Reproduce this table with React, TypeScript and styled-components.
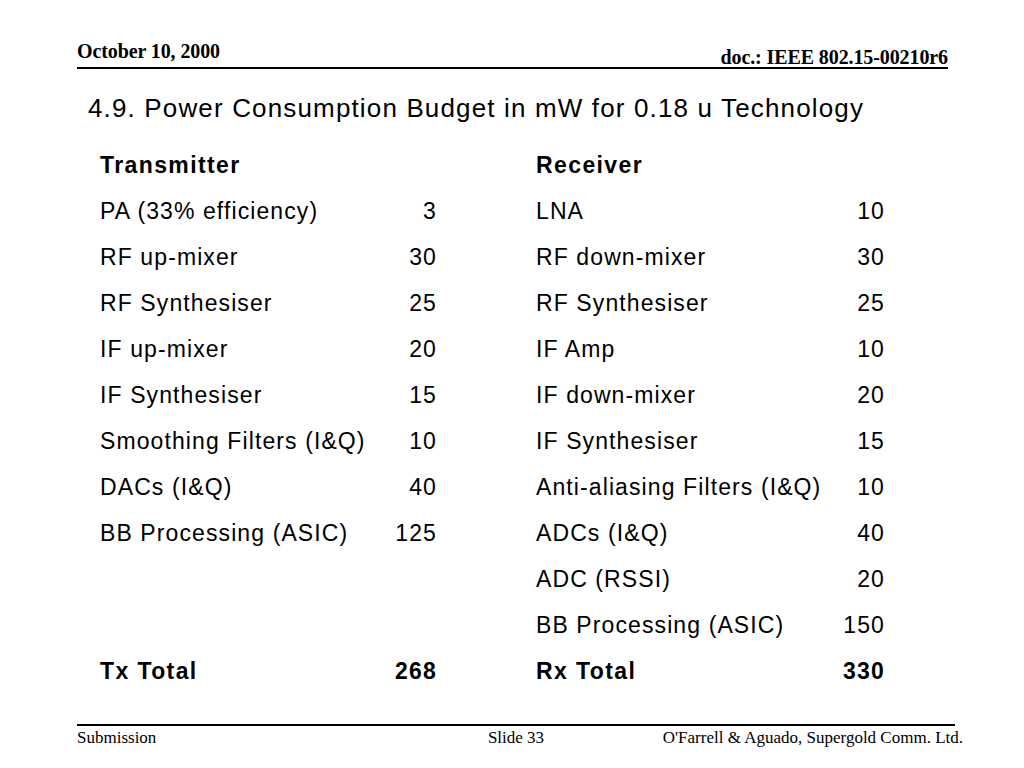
import React from "react";
import styled, { createGlobalStyle } from "styled-components";

const Global = createGlobalStyle`
  html, body { margin: 0; padding: 0; background: #fff; }
  body { width: 1024px; height: 768px; overflow: hidden; }
`;

const Slide = styled.div`
  width: 1024px;
  height: 768px;
  box-sizing: border-box;
  background: #fff;
  color: #000;
  display: flex;
  flex-direction: column;
  padding: 40px 0 0 0;
`;

const Header = styled.header`
  margin-left: 77px;
  width: 871px;
  height: 27px;
  display: flex;
  justify-content: space-between;
  align-items: flex-end;
  border-bottom: 2px solid #000;
  font-family: "Liberation Serif", "Times New Roman", serif;
  font-weight: bold;
`;

const HeaderText = styled.span<{ $lift: number }>`
  font-size: 20px;
  line-height: 20px;
  letter-spacing: -0.1px;
  margin-bottom: ${(p) => p.$lift}px;
`;

const Title = styled.h1`
  margin: 24px 0 0 88px;
  font-family: "Liberation Sans", Arial, sans-serif;
  font-weight: normal;
  font-size: 26px;
  line-height: 30px;
  letter-spacing: 1.15px;
`;

const Columns = styled.div`
  display: flex;
  margin: 19px 0 0 100px;
`;

const Column = styled.div<{ $width: number; $gap: number }>`
  width: ${(p) => p.$width}px;
  margin-right: ${(p) => p.$gap}px;
  display: grid;
  grid-template-columns: 1fr auto;
  grid-auto-rows: 46px;
  align-items: center;
  font-family: "Liberation Sans", Arial, sans-serif;
  font-size: 23px;
  letter-spacing: 1.1px;
`;

const Label = styled.div<{ $bold?: boolean }>`
  font-weight: ${(p) => (p.$bold ? "bold" : "normal")};
  letter-spacing: ${(p) => (p.$bold ? "1.4px" : "1.1px")};
  white-space: nowrap;
`;

const Value = styled.div<{ $bold?: boolean }>`
  text-align: right;
  margin-right: -1px;
  font-weight: ${(p) => (p.$bold ? "bold" : "normal")};
  letter-spacing: ${(p) => (p.$bold ? "1.2px" : "1.1px")};
`;

const Footer = styled.footer`
  margin: auto 0 0 77px;
  width: 878px;
  height: 44px;
  box-sizing: border-box;
  border-top: 2px solid #000;
  display: grid;
  grid-template-columns: 1fr auto 1fr;
  font-family: "Liberation Serif", "Times New Roman", serif;
  font-size: 17px;
  line-height: 20px;
  padding-top: 2px;
`;

const FooterLeft = styled.span``;
const FooterCenter = styled.span``;
const FooterRight = styled.span`
  text-align: right;
  margin-right: -8px;
`;

type Row = [string, string];

const tx: Row[] = [
  ["PA (33% efficiency)", "3"],
  ["RF up-mixer", "30"],
  ["RF Synthesiser", "25"],
  ["IF up-mixer", "20"],
  ["IF Synthesiser", "15"],
  ["Smoothing Filters (I&Q)", "10"],
  ["DACs (I&Q)", "40"],
  ["BB Processing (ASIC)", "125"],
  ["", ""],
  ["", ""],
];

const rx: Row[] = [
  ["LNA", "10"],
  ["RF down-mixer", "30"],
  ["RF Synthesiser", "25"],
  ["IF Amp", "10"],
  ["IF down-mixer", "20"],
  ["IF Synthesiser", "15"],
  ["Anti-aliasing Filters (I&Q)", "10"],
  ["ADCs (I&Q)", "40"],
  ["ADC (RSSI)", "20"],
  ["BB Processing (ASIC)", "150"],
];

const Table = ({
  title,
  rows,
  totalLabel,
  total,
  width,
  gap,
}: {
  title: string;
  rows: Row[];
  totalLabel: string;
  total: string;
  width: number;
  gap: number;
}) => (
  <Column $width={width} $gap={gap}>
    <Label $bold>{title}</Label>
    <Value />
    {rows.map(([l, v], i) => (
      <React.Fragment key={i}>
        <Label>{l}</Label>
        <Value>{v}</Value>
      </React.Fragment>
    ))}
    <Label $bold>{totalLabel}</Label>
    <Value $bold>{total}</Value>
  </Column>
);

export default function App() {
  return (
    <>
      <Global />
      <Slide>
        <Header>
          <HeaderText $lift={6}>October 10, 2000</HeaderText>
          <HeaderText $lift={0}>doc.: IEEE 802.15-00210r6</HeaderText>
        </Header>
        <Title>4.9. Power Consumption Budget in mW for 0.18 u Technology</Title>
        <Columns>
          <Table title="Transmitter" rows={tx} totalLabel="Tx Total" total="268" width={336} gap={100} />
          <Table title="Receiver" rows={rx} totalLabel="Rx Total" total="330" width={348} gap={0} />
        </Columns>
        <Footer>
          <FooterLeft>Submission</FooterLeft>
          <FooterCenter>Slide 33</FooterCenter>
          <FooterRight>O'Farrell &amp; Aguado, Supergold Comm. Ltd.</FooterRight>
        </Footer>
      </Slide>
    </>
  );
}
